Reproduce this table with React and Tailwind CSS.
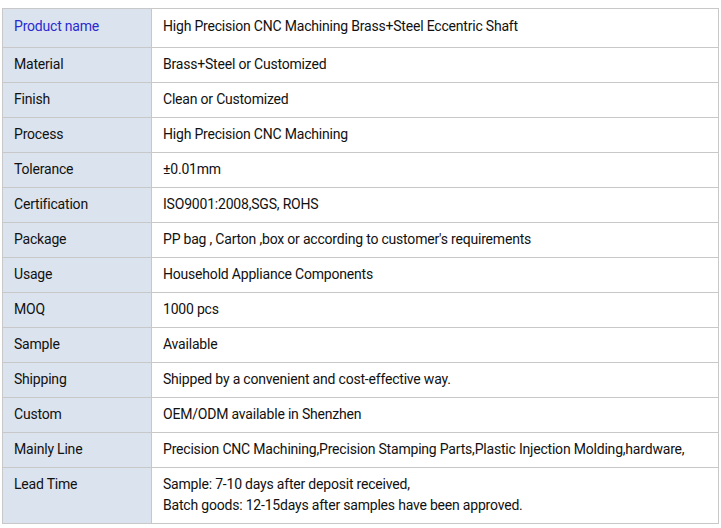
import React from 'react';

const rows = [
  ['Product name', ['High Precision CNC Machining Brass+Steel Eccentric Shaft']],
  ['Material', ['Brass+Steel or Customized']],
  ['Finish', ['Clean or Customized']],
  ['Process', ['High Precision CNC Machining']],
  ['Tolerance', ['±0.01mm']],
  ['Certification', ['ISO9001:2008,SGS, ROHS']],
  ['Package', ["PP bag , Carton ,box or according to customer's requirements"]],
  ['Usage', ['Household Appliance Components']],
  ['MOQ', ['1000 pcs']],
  ['Sample', ['Available']],
  ['Shipping', ['Shipped by a convenient and cost-effective way.']],
  ['Custom', ['OEM/ODM available in Shenzhen']],
  ['Mainly Line', ['Precision CNC Machining,Precision Stamping Parts,Plastic Injection Molding,hardware,']],
  ['Lead Time', ['Sample: 7-10 days after deposit received,', 'Batch goods: 12-15days after samples have been approved.']],
];

export default function App() {
  return (
    <div className="w-[721px] h-[528px] bg-white pt-2 pl-[2px] font-['Roboto',sans-serif] text-[14px] leading-[21px] tracking-[-0.2px] text-[#111]">
      <div className="w-[717px] border-l border-t border-[#c8c8c8]">
        {rows.map(([label, lines], i) => {
          const first = i === 0;
          const h = first ? 'h-[39px] pt-[7px]' : i === rows.length - 1 ? 'h-[56px] pt-[6px]' : 'h-[35px] pt-[6px]';
          return (
            <div key={label} className="flex">
              <div className={`w-[149px] shrink-0 bg-[#dbe3ee] border-r border-b border-[#c8c8c8] pl-[11px] ${h} ${first ? 'text-[#2a2ad0]' : ''}`}>
                {label}
              </div>
              <div className={`flex-1 border-r border-b border-[#c8c8c8] pl-[11px] ${h}`}>
                {lines.map((l) => (
                  <div key={l}>{l}</div>
                ))}
              </div>
            </div>
          );
        })}
      </div>
    </div>
  );
}
